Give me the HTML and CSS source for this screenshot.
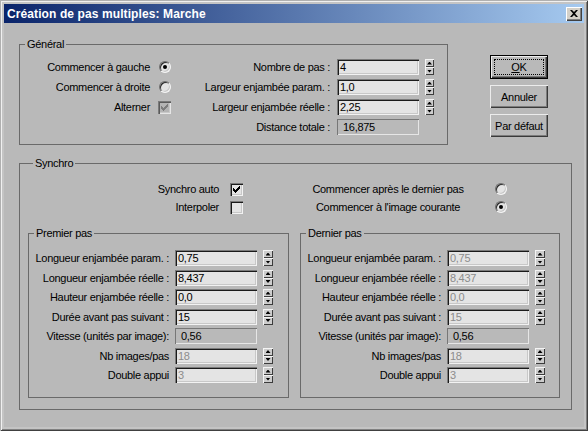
FILE: index.html
```html
<!DOCTYPE html>
<html lang="fr">
<head>
  <meta charset="UTF-8">
  <title>Création de pas multiples: Marche</title>
  <link rel="stylesheet" href="styles.css">
</head>
<body>

  <div class="window">
    <div class="titlebar">
      <span class="title">Création de pas multiples: Marche</span>
      <span class="close">
        <svg width="8" height="7" viewBox="0 0 8 7"><path d="M0 0h2l2 2 2-2h2L5 3.5 8 7H6L4 5 2 7H0l3-3.5z"/></svg>
      </span>
    </div>

    <div class="client">
      <div class="top">
        <fieldset class="group general">
          <legend>Général</legend>
          <div class="general-body">
            <div class="opts">
              <div class="opt"><span>Commencer à gauche</span><span class="ctl"><span class="radio on"></span></span></div>
              <div class="opt"><span>Commencer à droite</span><span class="ctl"><span class="radio"></span></span></div>
              <div class="opt"><span>Alterner</span><span class="ctl"><span class="check disabled on"><svg width="7" height="7" viewBox="0 0 7 7"><path d="M0 2h1v1h1v1h1V3h1V2h1V1h1V0h1v3H6v1H5v1H4v1H3v1H2V6H1V5H0z"/></svg></span></span></div>
            </div>
            <div class="params">
              <div class="param"><span class="lbl">Nombre de pas :</span><span class="edit">4</span><span class="spin"><i></i><i class="dn"></i></span></div>
              <div class="param"><span class="lbl">Largeur enjambée param. :</span><span class="edit">1,0</span><span class="spin"><i></i><i class="dn"></i></span></div>
              <div class="param"><span class="lbl">Largeur enjambée réelle :</span><span class="edit">2,25</span><span class="spin"><i></i><i class="dn"></i></span></div>
              <div class="param"><span class="lbl">Distance totale :</span><span class="edit readonly">16,875</span></div>
            </div>
          </div>
        </fieldset>

        <div class="buttons">
          <button class="btn default"><span class="focus"><u>O</u>K</span></button>
          <button class="btn">Annuler</button>
          <button class="btn">Par défaut</button>
        </div>
      </div>

      <fieldset class="group synchro">
        <legend>Synchro</legend>
        <div class="sync-rows">
          <div class="sync-row">
            <span class="sync-lbl">Synchro auto</span>
            <span class="check on"><svg width="7" height="7" viewBox="0 0 7 7"><path d="M0 2h1v1h1v1h1V3h1V2h1V1h1V0h1v3H6v1H5v1H4v1H3v1H2V6H1V5H0z"/></svg></span>
            <span class="sync-lbl2">Commencer après le dernier pas</span>
            <span class="radio"></span>
          </div>
          <div class="sync-row">
            <span class="sync-lbl">Interpoler</span>
            <span class="check"></span>
            <span class="sync-lbl2">Commencer à l'image courante</span>
            <span class="radio on"></span>
          </div>
        </div>

        <div class="steps">
          <fieldset class="group step first">
            <legend>Premier pas</legend>
            <div class="row"><span class="lbl">Longueur enjambée param. :</span><span class="edit">0,75</span><span class="spin"><i></i><i class="dn"></i></span></div>
            <div class="row"><span class="lbl">Longueur enjambée réelle :</span><span class="edit">8,437</span><span class="spin"><i></i><i class="dn"></i></span></div>
            <div class="row"><span class="lbl">Hauteur enjambée réelle :</span><span class="edit">0,0</span><span class="spin"><i></i><i class="dn"></i></span></div>
            <div class="row"><span class="lbl">Durée avant pas suivant :</span><span class="edit">15</span><span class="spin"><i></i><i class="dn"></i></span></div>
            <div class="row"><span class="lbl">Vitesse (unités par image):</span><span class="edit readonly">0,56</span></div>
            <div class="row"><span class="lbl">Nb images/pas</span><span class="edit disabled">18</span><span class="spin"><i></i><i class="dn"></i></span></div>
            <div class="row"><span class="lbl">Double appui</span><span class="edit disabled">3</span><span class="spin"><i></i><i class="dn"></i></span></div>
          </fieldset>

          <fieldset class="group step last">
            <legend>Dernier pas</legend>
            <div class="row"><span class="lbl">Longueur enjambée param. :</span><span class="edit disabled">0,75</span><span class="spin"><i></i><i class="dn"></i></span></div>
            <div class="row"><span class="lbl">Longueur enjambée réelle :</span><span class="edit disabled">8,437</span><span class="spin"><i></i><i class="dn"></i></span></div>
            <div class="row"><span class="lbl">Hauteur enjambée réelle :</span><span class="edit disabled">0,0</span><span class="spin"><i></i><i class="dn"></i></span></div>
            <div class="row"><span class="lbl">Durée avant pas suivant :</span><span class="edit disabled">15</span><span class="spin"><i></i><i class="dn"></i></span></div>
            <div class="row"><span class="lbl">Vitesse (unités par image):</span><span class="edit readonly">0,56</span></div>
            <div class="row"><span class="lbl">Nb images/pas</span><span class="edit disabled">18</span><span class="spin"><i></i><i class="dn"></i></span></div>
            <div class="row"><span class="lbl">Double appui</span><span class="edit disabled">3</span><span class="spin"><i></i><i class="dn"></i></span></div>
          </fieldset>
        </div>
      </fieldset>
    </div>
  </div>

</body>
</html>
```

FILE: styles.css
```css
body {
  margin: 0;
  font-family: 'Liberation Sans', Arial, sans-serif;
  font-size: 11px;
  letter-spacing: -0.3px;
  color: #000;
  background: #b9b9b9;
}

.window {
  width: 588px;
  height: 431px;
  box-sizing: border-box;
  padding: 4px;
  background: #c4c4c4;
  box-shadow: inset 1px 1px #b0b0b0, inset -1px -1px #404040,
              inset 2px 2px #f0f0f0, inset -2px -2px #808080;
  display: flex;
  flex-direction: column;
}

.titlebar {
  height: 19px;
  flex: none;
  display: flex;
  align-items: center;
  justify-content: space-between;
  padding: 0 2px 0 3px;
  background: linear-gradient(to right, #0a246a, #a6caf0);
}

.title {
  color: #fff;
  font-size: 12px;
  font-weight: bold;
  letter-spacing: 0.1px;
}

.close {
  width: 16px;
  height: 14px;
  box-sizing: border-box;
  display: flex;
  align-items: center;
  justify-content: center;
  background: #d4d0c8;
  box-shadow: inset 1px 1px #fff, inset -1px -1px #404040, inset -2px -2px #808080;
}

.client {
  flex: 1;
  background: #b9b9b9;
  padding: 15px 0 0 15px;
}

.top {
  display: flex;
  align-items: flex-start;
}

/* group boxes */
.group {
  margin: 0;
  padding: 0;
  border: 1px solid #6a6a6a;
  box-sizing: border-box;
  min-width: 0;
}

.group legend {
  padding: 0 2px;
  margin-left: 5px;
  line-height: 13px;
}

.general {
  width: 429px;
  padding: 0 12px 7px 0;
}

.general-body {
  display: flex;
  padding-top: 6px;
}

.opts {
  width: 151px;
}

.opt {
  height: 20px;
  display: flex;
  align-items: center;
  justify-content: flex-end;
}

.ctl {
  width: 13px;
  margin-left: 8px;
  display: flex;
  justify-content: center;
}

.params {
  width: 263px;
}

.param {
  height: 20px;
  display: flex;
  align-items: center;
}

.param .lbl {
  width: 159px;
  margin-right: 7px;
}

.lbl {
  flex: none;
  text-align: right;
  white-space: nowrap;
  display: flex;
  justify-content: flex-end;
}

/* edit boxes */
.edit {
  width: 82px;
  height: 16px;
  flex: none;
  box-sizing: border-box;
  padding: 0 0 0 3px;
  line-height: 16px;
  background: #e4e4e4;
  box-shadow: inset 1px 1px #7a7a7a, inset 2px 2px #1a1a1a,
              inset -1px -1px #f2f2f2, inset -2px -2px #c8c8c8;
}

.edit.disabled {
  color: #8c8c8c;
}

.edit.readonly {
  background: #b9b9b9;
  padding-left: 6px;
  box-shadow: inset 1px 1px #777, inset -1px -1px #e6e6e6;
}

/* spinners */
.spin {
  width: 9px;
  height: 16px;
  flex: none;
  margin-left: 6px;
  display: flex;
  flex-direction: column;
}

.spin i {
  flex: 1;
  display: flex;
  align-items: center;
  justify-content: center;
  background: #cdcdcd;
  box-shadow: inset 1px 1px #f4f4f4, inset -1px -1px #3c3c3c;
}

.spin i::after {
  content: '';
  width: 5px;
  height: 3px;
  background: #000;
  clip-path: polygon(50% 0, 100% 100%, 0 100%);
}

.spin i.dn::after {
  clip-path: polygon(0 0, 100% 0, 50% 100%);
}

/* radio and check */
.radio {
  width: 12px;
  height: 12px;
  flex: none;
  box-sizing: border-box;
  border-radius: 50%;
  background: #e4e4e4;
  border: 1px solid;
  border-color: #6e6e6e #f4f4f4 #f4f4f4 #6e6e6e;
  box-shadow: inset 1px 1px #2a2a2a, inset -1px -1px #c8c8c8;
  display: flex;
  align-items: center;
  justify-content: center;
}

.radio.on::after {
  content: '';
  width: 4px;
  height: 4px;
  border-radius: 50%;
  background: #000;
}

.check {
  width: 13px;
  height: 13px;
  flex: none;
  box-sizing: border-box;
  background: #e4e4e4;
  box-shadow: inset 1px 1px #7a7a7a, inset 2px 2px #1a1a1a,
              inset -1px -1px #f2f2f2, inset -2px -2px #c8c8c8;
  display: flex;
  align-items: center;
  justify-content: center;
}

.check svg {
  display: none;
}

.check.on svg {
  display: block;
}

.check.disabled {
  background: #b4b4b4;
  box-shadow: inset 1px 1px #7a7a7a, inset 2px 2px #5a5a5a,
              inset -1px -1px #e6e6e6, inset -2px -2px #c8c8c8;
}

.check.disabled svg {
  fill: #7c7c7c;
}

/* buttons */
.buttons {
  margin: 17px 0 0 42px;
  display: flex;
  flex-direction: column;
  gap: 6px;
}

.btn {
  width: 58px;
  height: 23px;
  padding: 0;
  border: none;
  font: inherit;
  letter-spacing: -0.3px;
  color: #000;
  background: #b9b9b9;
  box-shadow: inset 1px 1px #ececec, inset -1px -1px #3a3a3a, inset -2px -2px #7c7c7c;
  display: flex;
  align-items: center;
  justify-content: center;
}

.btn.default {
  border: 1px solid #000;
  box-sizing: border-box;
  height: 24px;
  padding: 3px;
}

.focus {
  flex: 1;
  align-self: stretch;
  display: flex;
  align-items: center;
  justify-content: center;
  outline: 1px dotted #000;
  outline-offset: -1px;
}

/* synchro */
.synchro {
  width: 553px;
  margin-top: 12px;
  padding: 0 10px 11px 8px;
}

.sync-rows {
  padding-top: 10px;
  margin-left: -8px;
}

.sync-row {
  height: 18px;
  display: flex;
  align-items: center;
}

.sync-lbl {
  width: 199px;
  text-align: right;
  margin-right: 11px;
}

.sync-lbl2 {
  width: 176px;
  margin-left: 57px;
  margin-right: 19px;
  text-align: center;
}

.steps {
  margin-top: 11px;
  display: flex;
  gap: 11px;
}

.step {
  padding: 8.25px 0 12.25px 0;
}

.step.first {
  width: 261px;
}

.step.last {
  width: 260px;
}

.row {
  height: 19.5px;
  display: flex;
  align-items: center;
}

.row .lbl {
  width: 140px;
  margin-right: 6px;
}

.row .spin {
  width: 10px;
}
```
